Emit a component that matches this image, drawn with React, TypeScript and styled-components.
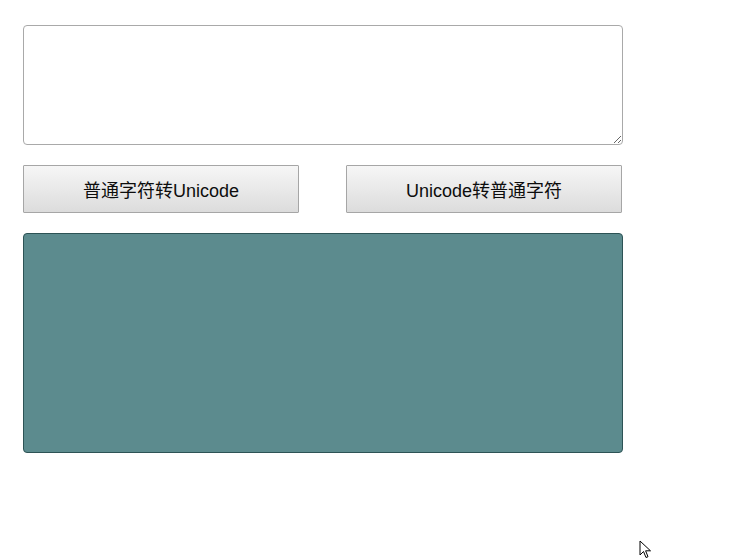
import styled, { createGlobalStyle } from "styled-components";

const GlobalStyle = createGlobalStyle`
  html, body {
    margin: 0;
    padding: 0;
    background: #fff;
  }
  body {
    font-family: "Liberation Sans", Arial, "Noto Sans CJK SC", sans-serif;
  }
`;

const Page = styled.div`
  position: relative;
  width: 742px;
  height: 560px;
  box-sizing: border-box;
  padding: 25px 0 0 23px;
`;

const Converter = styled.div`
  width: 600px;
  display: flex;
  flex-direction: column;
  gap: 20px;
`;

const Input = styled.textarea`
  display: block;
  width: 600px;
  height: 120px;
  box-sizing: border-box;
  margin: 0;
  border: 1px solid #a9a9a9;
  border-radius: 4px;
  padding: 6px;
  font-family: "Liberation Sans", "Noto Sans CJK SC", sans-serif;
  font-size: 14px;
  resize: both;
  outline: none;
`;

const Buttons = styled.div`
  display: flex;
  justify-content: space-between;
  padding-right: 1px;
`;

const Button = styled.button`
  width: 276px;
  height: 48px;
  margin: 0;
  padding: 0;
  box-sizing: border-box;
  border: 1px solid #a6a6a6;
  border-radius: 1px;
  background: linear-gradient(to bottom, #f6f6f6, #dcdcdc);
  color: #0d0d0d;
  font-family: "Liberation Sans", "Noto Sans CJK SC", sans-serif;
  font-size: 18px;
  cursor: pointer;
`;

const Output = styled.div`
  width: 600px;
  height: 220px;
  box-sizing: border-box;
  border: 1px solid #2d5355;
  border-radius: 4px;
  background: #5c8b8e;
`;

const Cursor = styled.svg`
  position: absolute;
  left: 639px;
  top: 540px;
`;

export default function App() {
  return (
    <Page>
      <GlobalStyle />
      <Converter>
        <Input />
        <Buttons>
          <Button>普通字符转Unicode</Button>
          <Button>Unicode转普通字符</Button>
        </Buttons>
        <Output />
      </Converter>
      <Cursor width="14" height="20" viewBox="0 0 14 20">
        <path
          d="M1 1 L1 15 L4.5 11.5 L7 17.5 L9 16.7 L6.6 10.8 L11.5 10.8 Z"
          fill="#fff"
          stroke="#000"
          strokeWidth="1"
          strokeLinejoin="miter"
        />
      </Cursor>
    </Page>
  );
}
